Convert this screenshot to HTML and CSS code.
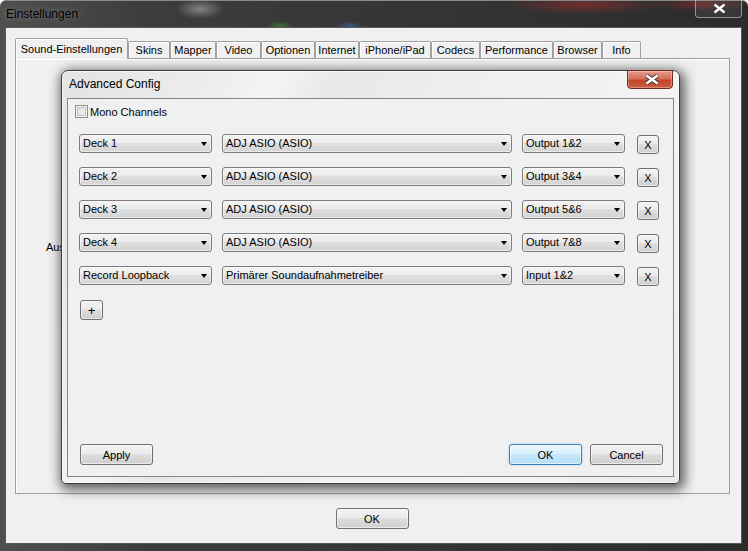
FILE: index.html
```html
<!DOCTYPE html>
<html lang="de">
<head>
    <meta charset="UTF-8">
    <meta name="viewport" content="width=device-width, initial-scale=1.0">
    <title>Einstellungen</title>
    <link rel="stylesheet" href="styles.css">
</head>
<body>
    <div class="window">
        <div class="titlebar">
            <span class="title">Einstellungen</span>
            <div class="win-close">
                <svg width="45" height="17" viewBox="0 0 45 17">
                    <path d="M18.5 4.5 L28.5 12.5 M28.5 4.5 L18.5 12.5" stroke="#3a3a3a" stroke-width="4.2" fill="none"/>
                    <path d="M18.5 4.5 L28.5 12.5 M28.5 4.5 L18.5 12.5" stroke="#fff" stroke-width="2.4" fill="none"/>
                </svg>
            </div>
        </div>

        <div class="client">
            <div class="tabs">
                <div class="tab active t-sound">Sound-Einstellungen</div>
                <div class="tab t-skins">Skins</div>
                <div class="tab t-mapper">Mapper</div>
                <div class="tab t-video">Video</div>
                <div class="tab t-optionen">Optionen</div>
                <div class="tab t-internet">Internet</div>
                <div class="tab t-iphone">iPhone/iPad</div>
                <div class="tab t-codecs">Codecs</div>
                <div class="tab t-perf">Performance</div>
                <div class="tab t-browser">Browser</div>
                <div class="tab t-info">Info</div>
            </div>
            <div class="panel">
                <!-- only the start of this label peeks out from behind the dialog -->
                <span class="panel-label">Ausgabe:</span>
            </div>
            <div class="footer">
                <button class="btn btn-main-ok">OK</button>
            </div>
        </div>

        <!-- Advanced Config dialog on top of the settings window -->
        <div class="dialog">
            <div class="dlg-title">Advanced Config</div>
            <div class="dlg-close">
                <svg width="44" height="17" viewBox="0 0 44 17">
                    <path d="M18.5 4.5 L29.5 12.5 M29.5 4.5 L18.5 12.5" stroke="#3b3b3b" stroke-width="4.4" fill="none"/>
                    <path d="M18.5 4.5 L29.5 12.5 M29.5 4.5 L18.5 12.5" stroke="#fff" stroke-width="2.5" fill="none"/>
                </svg>
            </div>

            <div class="dlg-client">
                <div class="mono">
                    <span class="check"></span>
                    <span class="mono-label">Mono Channels</span>
                </div>

                <div class="channels">
                    <div class="channel">
                        <div class="combo combo-deck">Deck 1</div>
                        <div class="combo combo-device">ADJ ASIO (ASIO)</div>
                        <div class="combo combo-port">Output 1&amp;2</div>
                        <button class="btn btn-x">X</button>
                    </div>
                    <div class="channel">
                        <div class="combo combo-deck">Deck 2</div>
                        <div class="combo combo-device">ADJ ASIO (ASIO)</div>
                        <div class="combo combo-port">Output 3&amp;4</div>
                        <button class="btn btn-x">X</button>
                    </div>
                    <div class="channel">
                        <div class="combo combo-deck">Deck 3</div>
                        <div class="combo combo-device">ADJ ASIO (ASIO)</div>
                        <div class="combo combo-port">Output 5&amp;6</div>
                        <button class="btn btn-x">X</button>
                    </div>
                    <div class="channel">
                        <div class="combo combo-deck">Deck 4</div>
                        <div class="combo combo-device">ADJ ASIO (ASIO)</div>
                        <div class="combo combo-port">Output 7&amp;8</div>
                        <button class="btn btn-x">X</button>
                    </div>
                    <div class="channel">
                        <div class="combo combo-deck">Record Loopback</div>
                        <div class="combo combo-device">Primärer Soundaufnahmetreiber</div>
                        <div class="combo combo-port">Input 1&amp;2</div>
                        <button class="btn btn-x">X</button>
                    </div>
                </div>

                <button class="btn btn-plus">+</button>

                <div class="spacer"></div>

                <div class="dlg-footer">
                    <button class="btn btn-wide">Apply</button>
                    <button class="btn btn-wide btn-default">OK</button>
                    <button class="btn btn-wide btn-cancel">Cancel</button>
                </div>
            </div>
        </div>
    </div>
</body>
</html>
```

FILE: styles.css
```css
/* Page */
body {
    margin: 0;
    width: 748px;
    height: 551px;
    overflow: hidden;
    font-family: "Liberation Sans", Arial, sans-serif;
    font-size: 11px;
    color: #000;
}

/* Outer window (Aero frame over a blurred desktop) */
.window {
    position: relative;
    width: 748px;
    height: 551px;
    display: flex;
    flex-direction: column;
    border-radius: 6px 6px 0 0;
    background:
        radial-gradient(ellipse 24px 10px at 200px 9px, rgba(200, 200, 200, .5), transparent),
        radial-gradient(ellipse 80px 9px at 585px 5px, rgba(170, 45, 45, .55), transparent),
        radial-gradient(ellipse 50px 8px at 700px 4px, rgba(170, 45, 45, .45), transparent),
        radial-gradient(ellipse 14px 5px at 280px 26px, rgba(60, 160, 60, .5), transparent),
        radial-gradient(ellipse 14px 5px at 350px 26px, rgba(60, 120, 190, .5), transparent),
        linear-gradient(90deg, #505050, #3c3c3c 20%, #343434 60%, #2b2b2b);
    box-shadow: inset 0 1px 0 #8a8a8a;
}

.titlebar {
    position: relative;
    height: 27px;
    display: flex;
    align-items: center;
    padding-left: 6px;
}

.title {
    font-size: 12px;
    text-shadow: 0 0 6px rgba(255, 255, 255, .35);
}

.win-close {
    position: absolute;
    top: 0;
    right: 6px;
    width: 47px;
    height: 18px;
    box-sizing: border-box;
    border: 1px solid rgba(255, 255, 255, .45);
    border-top: none;
    border-radius: 0 0 4px 4px;
    background: rgba(255, 255, 255, .06);
}

.win-close svg {
    display: block;
}

/* Client area of the settings window */
.client {
    margin: 0 6px 0 5px;
    height: 517px;
    box-sizing: border-box;
    border: 1px solid #5a5a5a;
    background: #f0f0f0;
    display: flex;
    flex-direction: column;
}

.tabs {
    display: flex;
    align-items: flex-end;
    height: 20px;
    margin: 10px 0 0 9px;
    position: relative;
    z-index: 1;
}

.tab {
    height: 17px;
    box-sizing: border-box;
    border: 1px solid #a0a0a0;
    border-bottom: none;
    border-radius: 2px 2px 0 0;
    box-shadow: inset 1px 1px 0 #fff;
    background: #f0f0f0;
    text-align: center;
    line-height: 16px;
    white-space: nowrap;
}

.tab.active {
    height: 21px;
    margin-bottom: -1px;
    padding-top: 2px;
    line-height: 17px;
}

.t-sound { width: 113px; }
.t-skins { width: 42px; }
.t-mapper { width: 46px; }
.t-video { width: 45px; }
.t-optionen { width: 54px; }
.t-internet { width: 44px; }
.t-iphone { width: 72px; }
.t-codecs { width: 49px; }
.t-perf { width: 73px; }
.t-browser { width: 49px; }
.t-info { width: 39px; }

.panel {
    margin-left: 9px;
    width: 715px;
    height: 436px;
    box-sizing: border-box;
    border: 1px solid #a0a0a0;
    box-shadow: inset 1px 1px 0 #fff;
    padding: 182px 0 0 30px;
}

.panel-label {
    display: inline-block;
    width: 15px;
    overflow: hidden;
    white-space: nowrap;
    vertical-align: top;
}

.footer {
    flex: 1;
    display: flex;
    justify-content: center;
    align-items: flex-start;
    padding: 14px 3px 0 0;
}

/* Buttons */
.btn {
    box-sizing: border-box;
    height: 21px;
    padding: 0;
    border: 1px solid #707070;
    border-radius: 3px;
    background: linear-gradient(#f2f2f2, #ebebeb 45%, #dddddd 50%, #cfcfcf);
    box-shadow: inset 0 0 0 1px rgba(255, 255, 255, .55);
    font-family: "Liberation Sans", Arial, sans-serif;
    font-size: 11px;
    color: #000;
    display: flex;
    align-items: center;
    justify-content: center;
}

.btn-main-ok {
    width: 73px;
}

/* Advanced Config dialog */
.dialog {
    position: absolute;
    left: 61px;
    top: 70px;
    width: 619px;
    height: 414px;
    box-sizing: border-box;
    border: 1px solid #3a3a3a;
    border-radius: 7px 7px 5px 5px;
    padding: 0 5px 6px 5px;
    display: flex;
    flex-direction: column;
    background: linear-gradient(115deg, #e3e3e3 0%, #ececec 18%, #f4f4f4 27%, #e8e8e8 34%, #f0f0f0 55%, #f3f3f3 80%, #e9e9e9 100%);
    box-shadow: inset 0 0 0 1px rgba(255, 255, 255, .7), 2px 3px 12px 3px rgba(0, 0, 0, .6);
}

.dlg-title {
    height: 27px;
    line-height: 27px;
    padding-left: 2px;
    font-size: 12px;
}

.dlg-close {
    position: absolute;
    top: -1px;
    right: 6px;
    width: 46px;
    height: 19px;
    box-sizing: border-box;
    border: 1px solid #6e2b22;
    border-radius: 0 0 4px 4px;
    background: linear-gradient(#e89c8b, #d46e59 45%, #c4432a 55%, #cc5e45);
    box-shadow: inset 0 0 0 1px rgba(255, 220, 210, .4);
}

.dlg-close svg {
    display: block;
}

.dlg-client {
    flex: 1;
    border: 1px solid #858585;
    background: #f0f0f0;
    display: flex;
    flex-direction: column;
}

.mono {
    display: flex;
    align-items: center;
    height: 13px;
    margin: 6px 0 0 7px;
}

.check {
    width: 13px;
    height: 13px;
    box-sizing: border-box;
    border: 1px solid #8e8f8f;
    background: linear-gradient(135deg, #d8d8d8, #f8f8f8);
    box-shadow: inset 0 0 0 1px #f4f4f4, inset 0 0 0 2px #bfc2c5;
}

.mono-label {
    margin-left: 2px;
}

.channels {
    display: flex;
    flex-direction: column;
    gap: 13px;
    margin: 16px 0 0 11px;
}

.channel {
    display: flex;
    align-items: flex-start;
}

.combo {
    position: relative;
    height: 19px;
    box-sizing: border-box;
    border: 1px solid #7c7c7c;
    border-radius: 3px;
    background: linear-gradient(#f3f3f3, #ececec 45%, #dfdfdf 50%, #d4d4d4);
    box-shadow: inset 0 0 0 1px rgba(255, 255, 255, .5);
    padding-left: 3px;
    line-height: 17px;
    white-space: nowrap;
}

.combo::after {
    content: "";
    position: absolute;
    right: 4px;
    top: 7px;
    border-left: 3.5px solid transparent;
    border-right: 3.5px solid transparent;
    border-top: 4px solid #000;
}

.combo-deck {
    width: 133px;
    margin-right: 10px;
}

.combo-device {
    width: 290px;
    margin-right: 10px;
}

.combo-port {
    width: 103px;
    margin-right: 12px;
}

.btn-x {
    width: 22px;
    height: 19px;
    margin-top: 1px;
}

.btn-plus {
    width: 23px;
    height: 20px;
    margin: 14px 0 0 12px;
    font-size: 13px;
}

.spacer {
    flex: 1;
}

.dlg-footer {
    display: flex;
    padding: 0 10px 11px 12px;
}

.btn-wide {
    width: 73px;
}

.btn-default {
    margin-left: auto;
    border-color: #3c7fb1;
    background: linear-gradient(#eaf6fd, #d9f0fc 45%, #c6e8fb 50%, #b4def5);
    box-shadow: inset 0 0 0 1px rgba(255, 255, 255, .6), 0 0 2px rgba(80, 170, 230, .6);
}

.btn-cancel {
    margin-left: 8px;
}
```
